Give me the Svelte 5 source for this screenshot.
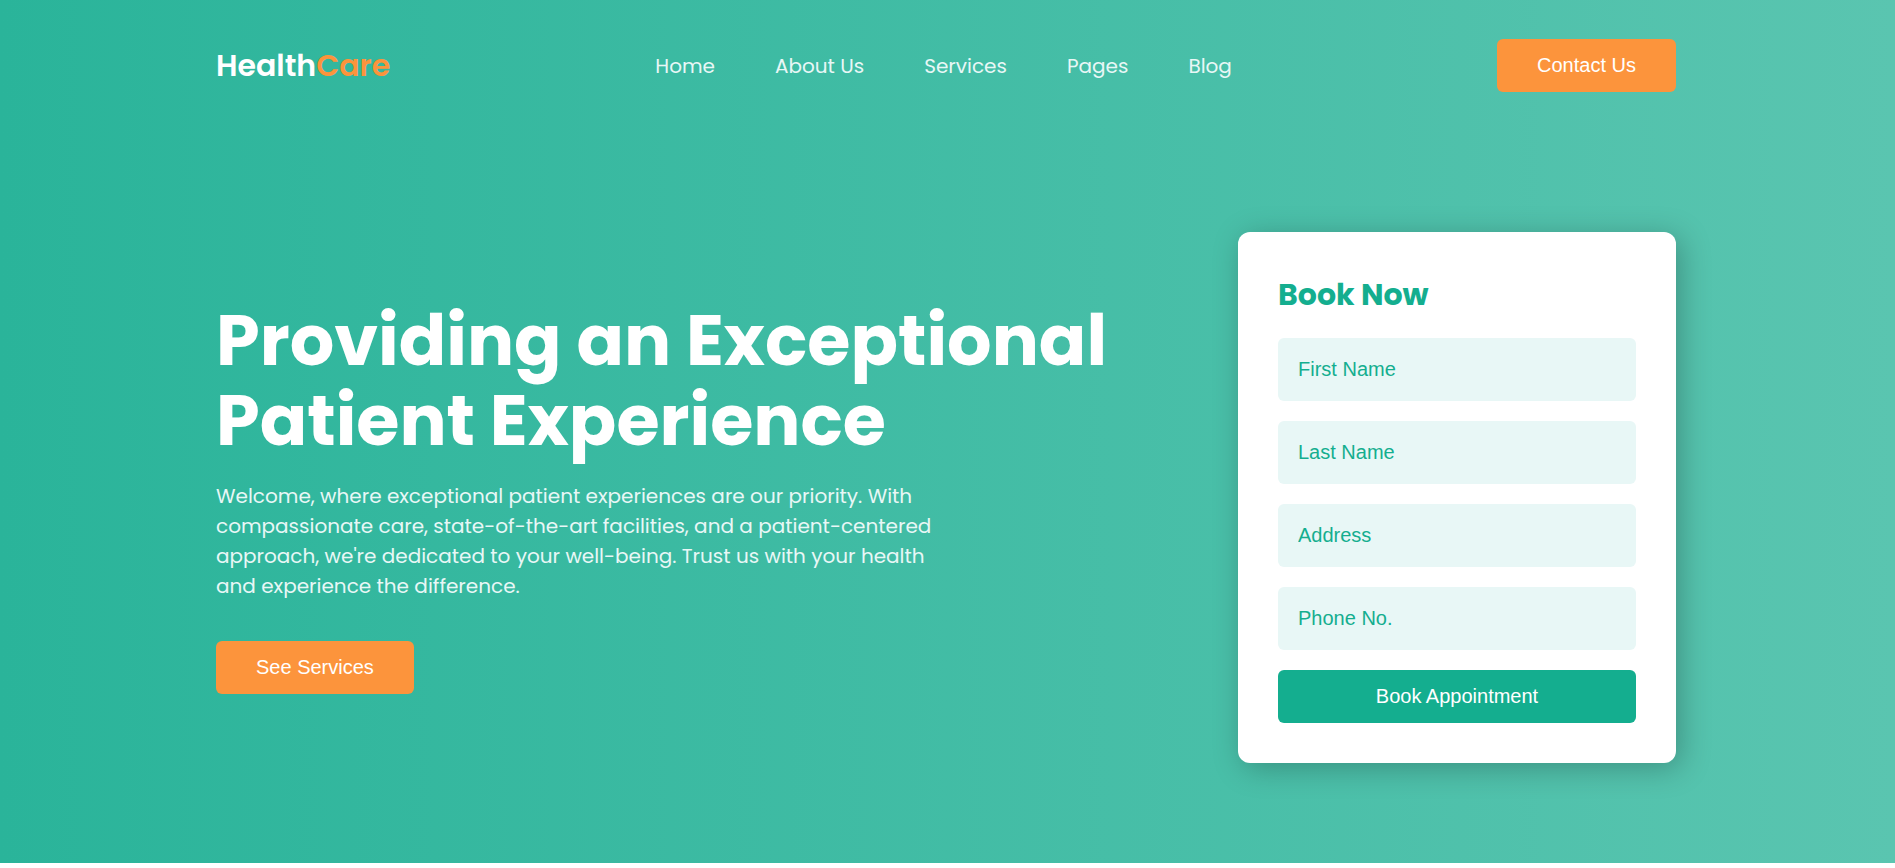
<script>
	const links = ["Home", "About Us", "Services", "Pages", "Blog"];

	const fields = [
		{ id: "first-name", label: "First Name", type: "text" },
		{ id: "last-name", label: "Last Name", type: "text" },
		{ id: "address", label: "Address", type: "text" },
		{ id: "phone", label: "Phone No.", type: "tel" }
	];

	let booking = $state({});

	function book(event){
		event.preventDefault();
		booking = {};
	}
</script>

<div class="hero">
	<header>
		<a class="logo" href="#home">Health<span>Care</span></a>
		<nav>
			{#each links as link}
				<a href="#{link.toLowerCase().replace(' ', '-')}">{link}</a>
			{/each}
		</nav>
		<button class="btn" type="button">Contact Us</button>
	</header>

	<main>
		<section class="intro">
			<h1>Providing an Exceptional Patient Experience</h1>
			<p>
				Welcome, where exceptional patient experiences are our priority. With
				compassionate care, state-of-the-art facilities, and a patient-centered
				approach, we're dedicated to your well-being. Trust us with your health
				and experience the difference.
			</p>
			<button class="btn" type="button">See Services</button>
		</section>

		<form class="card" onsubmit={book}>
			<h2>Book Now</h2>
			{#each fields as field}
				<input
					id={field.id}
					type={field.type}
					placeholder={field.label}
					aria-label={field.label}
					bind:value={booking[field.id]}
				>
			{/each}
			<button class="btn btn-green" type="submit">Book Appointment</button>
		</form>
	</main>
</div>

<style>
	:global(body){
		background-color: #fff;
	}

	.hero{
		padding: 39px 219px 100px 216px;
		background: linear-gradient(to right, #2ab49a, #5ac5b0);
		color: #fff;
		font-family: Poppins, Inter, sans-serif;
		font-size: 20px;
		line-height: 30px;
	}

	header{
		display: flex;
		justify-content: space-between;
		align-items: center;
		margin-bottom: 140px;
	}

	.logo{
		color: #fff;
		font-size: 30px;
		font-weight: 600;
		text-decoration: none;
	}

	.logo span{
		color: #fc943c;
	}

	nav{
		display: flex;
		gap: 60px;
	}

	nav a{
		color: #e8f7f6;
		text-decoration: none;
	}

	.btn{
		padding: 15px 40px;
		border: none;
		border-radius: 6px;
		background-color: #fc943c;
		color: #fff;
		font-family: "Liberation Sans", Arial, sans-serif;
		font-size: 20px;
		line-height: 23px;
		cursor: pointer;
	}

	.btn-green{
		background-color: #14ae8f;
	}

	main{
		display: flex;
		justify-content: space-between;
		align-items: center;
		gap: 40px;
	}

	.intro{
		flex: 0 1 920px;
	}

	h1{
		margin: 0 0 20px;
		font-size: 70px;
		font-weight: 700;
		line-height: 80px;
	}

	p{
		max-width: 730px;
		margin: 0 0 40px;
		color: #e8f7f6;
	}

	.card{
		display: flex;
		flex-direction: column;
		gap: 20px;
		width: 30%;
		padding: 40px;
		box-sizing: border-box;
		border-radius: 12px;
		background-color: #fff;
		box-shadow: 5px 5px 30px rgba(0, 0, 0, 0.25);
	}

	h2{
		margin: 0;
		color: #14ae8f;
		font-size: 30px;
		font-weight: 700;
		line-height: 46px;
	}

	input{
		padding: 20px;
		border: none;
		border-radius: 6px;
		background-color: #e8f7f6;
		color: #14ae8f;
		font-family: "Liberation Sans", Arial, sans-serif;
		font-size: 20px;
		line-height: 23px;
	}

	input::placeholder{
		color: #14ae8f;
	}

	@media screen and (max-width: 1400px){
		.hero{
			padding-left: 40px;
			padding-right: 40px;
		}
	}

	@media screen and (max-width: 900px){
		header, main{
			flex-direction: column;
			align-items: stretch;
			gap: 30px;
		}
		nav{
			flex-wrap: wrap;
			gap: 20px;
		}
		.card{
			width: 100%;
		}
	}
</style>
